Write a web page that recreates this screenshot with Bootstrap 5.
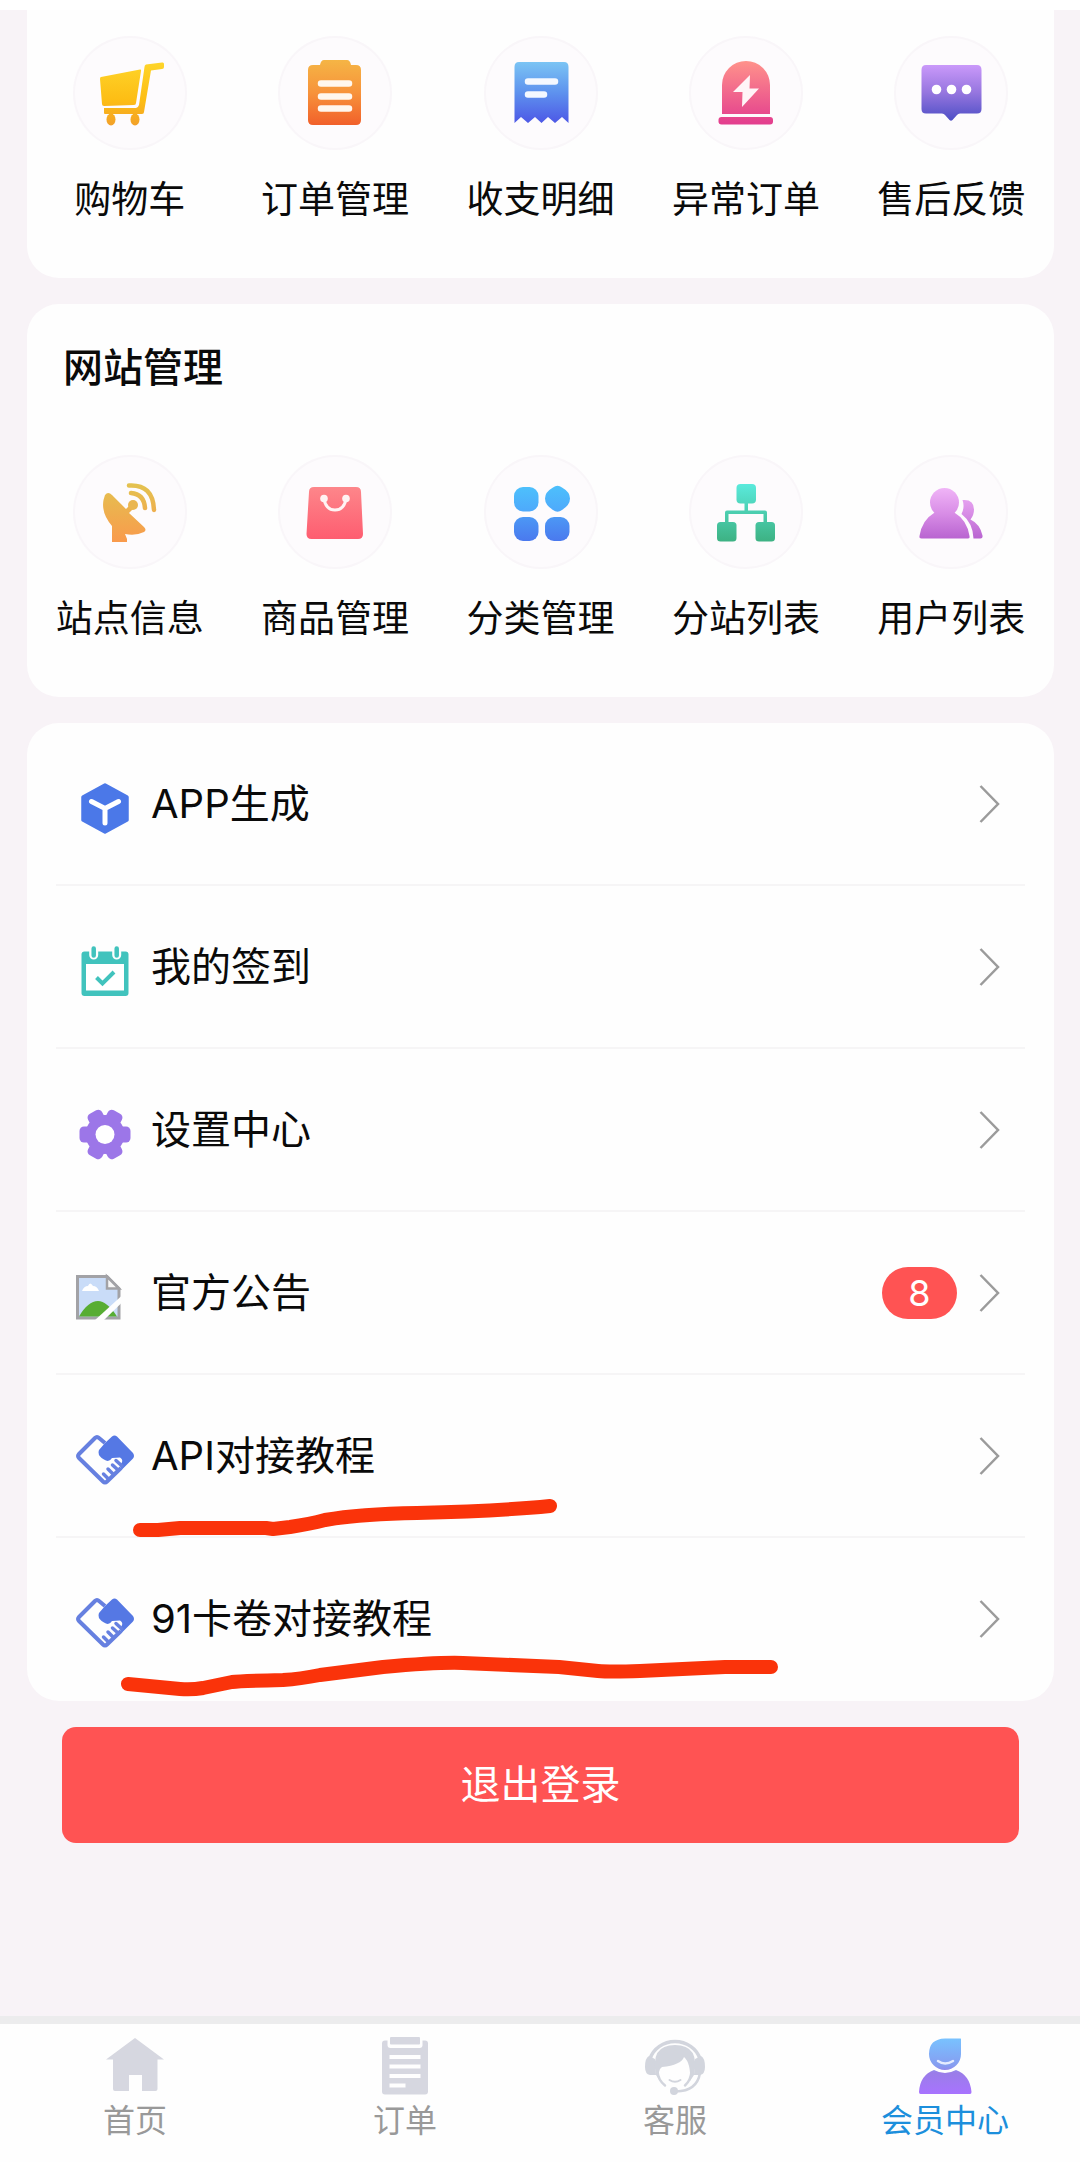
<!DOCTYPE html>
<html lang="zh-CN">
<head>
<meta charset="utf-8">
<meta name="viewport" content="width=device-width, initial-scale=1">
<title>会员中心</title>
<link href="https://cdn.jsdelivr.net/npm/bootstrap@5.3.0/dist/css/bootstrap.min.css" rel="stylesheet">
<style>
  body { background: #f8f3f7; color: #0a0a0a; font-family: Inter, "Noto Sans CJK SC", sans-serif; }
  a { color: inherit; text-decoration: none; }
  svg { display: block; flex: none; }
  .top-strip { height: 10px; }
  .page-main { padding: 0 26px 170px 27px; }
  .panel { background: #fefefe; border-radius: 32px; margin-bottom: 26px; }
  .panel-cut { border-radius: 0 0 32px 32px; padding: 26px 0 54px; }
  .panel-site { padding: 40px 0 54px; }
  .panel-title { font-size: 40px; line-height: 48px; font-weight: 500; margin: 0 0 63px 36px; }
  .shortcut-disc { width: 114px; height: 114px; background: #fdfbfd; border-radius: 50%; box-shadow: inset 0 0 0 2px #f9f6f9; margin-bottom: 26px; }
  .shortcut-label { font-size: 37px; line-height: 48px; white-space: nowrap; }
  .panel-menu { padding: 0 29px; }
  .menu-row { height: 163px; padding: 0 25px 0 20px; font-size: 40px; line-height: 48px; border-bottom: 2px solid #f6f5f6; }
  .menu-row:last-of-type { border-bottom-color: transparent; }
  .menu-icon { margin: 8px 17px 0 0; }
  .count-pill { width: 75px; height: 52px; border-radius: 26px; background: #ff5353; color: #fff; font-size: 36px; line-height: 52px; margin-right: 22px; }
  .pen-marks { left: 0; top: 0; pointer-events: none; }
  .btn-logout { --bs-btn-bg: #ff5353; --bs-btn-color: #fff; --bs-btn-hover-bg: #f04444; --bs-btn-hover-color: #fff; height: 116px; border-radius: 14px; font-size: 40px; line-height: 48px; border: 0; }
  .logout-wrap { padding: 0 35px; }
  .tabbar { background: #fefefe; border-top: 8px solid #ececed; }
  .tab-link { padding: 13px 0 21px; color: #999; font-size: 32px; line-height: 40px; }
  .tab-link svg { margin-bottom: 6px; }
  .tab-link.current { color: #1c8fdc; }
</style>
<script src="https://cdn.jsdelivr.net/npm/bootstrap@5.3.0/dist/js/bootstrap.bundle.min.js"></script>
</head>
<body>
<div class="top-strip bg-white"></div>
<main class="page-main">

  <section class="panel panel-cut">
    <div class="row g-0 text-center">
      <a href="#" class="col d-flex flex-column align-items-center">
        <span class="shortcut-disc"><svg width="114" height="114" viewBox="0 0 114 114"><defs><linearGradient id="gCart" gradientUnits="userSpaceOnUse" x1="0" y1="26" x2="0" y2="90"><stop stop-color="#fed52a"/><stop offset=".6" stop-color="#fdbd14"/><stop offset="1" stop-color="#f2a02a"/></linearGradient></defs><g fill="url(#gCart)"><path d="M28 41 67 33.500Q68.500 33 68 35L63 67Q63 69 61 69L31 70Q29 70 29 68L27 43Q27 41 28 41Z"/><path d="M73 28.500 89 26.500Q91 26 91 28V31Q91 33 89 33L78 34.500 71 76Q71 78 69 78H32Q31 78 31 77V72L63 72Q65 72 66 69L71.500 31Q71.500 29 73 28.500Z"/><ellipse cx="38" cy="83.500" rx="4.500" ry="6"/><ellipse cx="62" cy="83.500" rx="4.500" ry="6"/><path d="M36 77h4v4h-4zM60 77h4v4h-4z"/></g></svg></span>
        <span class="shortcut-label">购物车</span>
      </a>
      <a href="#" class="col d-flex flex-column align-items-center">
        <span class="shortcut-disc"><svg width="114" height="114" viewBox="0 0 114 114"><defs><linearGradient id="gClip" gradientUnits="userSpaceOnUse" x1="0" y1="24" x2="0" y2="89"><stop stop-color="#f5b545"/><stop offset=".5" stop-color="#f7933b"/><stop offset="1" stop-color="#f1602a"/></linearGradient></defs><path fill="url(#gClip)" d="M35 29H42Q43 24 46 24H69Q72 24 73 29H78Q83 29 83 34V84Q83 89 78 89H35Q30 89 30 84V34Q30 29 35 29Z"/><path d="M43 47.500H71M43 60.500H71M43 72.500H71" stroke="#fff7ee" stroke-width="6.500" stroke-linecap="round"/></svg></span>
        <span class="shortcut-label">订单管理</span>
      </a>
      <a href="#" class="col d-flex flex-column align-items-center">
        <span class="shortcut-disc"><svg width="114" height="114" viewBox="0 0 114 114"><defs><linearGradient id="gBill" gradientUnits="userSpaceOnUse" x1="0" y1="26" x2="0" y2="87"><stop stop-color="#7bc4f4"/><stop offset=".5" stop-color="#5e92ee"/><stop offset="1" stop-color="#4d58e6"/></linearGradient></defs><path fill="url(#gBill)" d="M35 26H80Q84.500 26 84.500 31V87L78 81 71 87 64 81 57.500 87 51 81 44 87 37 81 30.500 87V31Q30.500 26 35 26Z"/><path d="M44 45.500H71M44 58.500H60" stroke="#f4f8ff" stroke-width="6.500" stroke-linecap="round"/></svg></span>
        <span class="shortcut-label">收支明细</span>
      </a>
      <a href="#" class="col d-flex flex-column align-items-center">
        <span class="shortcut-disc"><svg width="114" height="114" viewBox="0 0 114 114"><defs><linearGradient id="gAlarm" gradientUnits="userSpaceOnUse" x1="0" y1="25" x2="0" y2="88"><stop stop-color="#ff928b"/><stop offset="1" stop-color="#e33d8e"/></linearGradient></defs><g fill="url(#gAlarm)"><path d="M33 78V49A24 24 0 0 1 81 49V78Z"/><rect x="29.500" y="81" width="54.500" height="7.500" rx="3"/></g><path fill="#fff5f7" d="M61 39 44 56H53.500L53 71 70 52.500H60.500Z"/></svg></span>
        <span class="shortcut-label">异常订单</span>
      </a>
      <a href="#" class="col d-flex flex-column align-items-center">
        <span class="shortcut-disc"><svg width="114" height="114" viewBox="0 0 114 114"><defs><linearGradient id="gChat" gradientUnits="userSpaceOnUse" x1="0" y1="29" x2="0" y2="84"><stop stop-color="#ca99fa"/><stop offset=".5" stop-color="#9676df"/><stop offset="1" stop-color="#4f4fc6"/></linearGradient></defs><path fill="url(#gChat)" d="M32 29H83Q87.500 29 87.500 34V73Q87.500 77.500 83 77.500H66Q64 77.500 63 79L58.500 84Q57 85.500 55.500 84L51 79Q50 77.500 48 77.500H32Q27.500 77.500 27.500 73V34Q27.500 29 32 29Z"/><g fill="#fff"><circle cx="42.500" cy="53.500" r="4.800"/><circle cx="57.500" cy="53.500" r="4.800"/><circle cx="72.500" cy="53.500" r="4.800"/></g></svg></span>
        <span class="shortcut-label">售后反馈</span>
      </a>
    </div>
  </section>

  <section class="panel panel-site">
    <h2 class="panel-title">网站管理</h2>
    <div class="row g-0 text-center">
      <a href="#" class="col d-flex flex-column align-items-center">
        <span class="shortcut-disc"><svg width="114" height="114" viewBox="0 0 114 114"><defs><linearGradient id="gDish" gradientUnits="userSpaceOnUse" x1="0" y1="28" x2="0" y2="87"><stop stop-color="#e3c350"/><stop offset="1" stop-color="#f99a4c"/></linearGradient></defs><path fill="url(#gDish)" d="M32 40Q35 36 39 40L53 54 57 50 60 54 56 58 71 72Q74 75 71 77Q63 81 52 79L54 84V87H39V71Q28 58 30.500 45Z"/><circle cx="60" cy="50" r="5" fill="#eab650"/><g fill="none" stroke="url(#gDish)" stroke-width="4.500" stroke-linecap="round"><path d="M58 38Q71 39 72 53"/><path d="M56 30.500Q80 29 81 55"/></g></svg></span>
        <span class="shortcut-label">站点信息</span>
      </a>
      <a href="#" class="col d-flex flex-column align-items-center">
        <span class="shortcut-disc"><svg width="114" height="114" viewBox="0 0 114 114"><defs><linearGradient id="gBag" gradientUnits="userSpaceOnUse" x1="0" y1="32" x2="0" y2="84"><stop stop-color="#fd868a"/><stop offset="1" stop-color="#fe5d70"/></linearGradient></defs><path fill="url(#gBag)" d="M36 32H78Q83 32 83 37L85 79Q85 84 80 84H33.500Q28.500 84 28.500 79L31 37Q31 32 36 32Z"/><g fill="#fff3f3"><circle cx="46" cy="43.500" r="3.800"/><circle cx="68" cy="43.500" r="3.800"/></g><path d="M46 44Q48 55 57 55Q66 55 68 44" fill="none" stroke="#fff3f3" stroke-width="3"/></svg></span>
        <span class="shortcut-label">商品管理</span>
      </a>
      <a href="#" class="col d-flex flex-column align-items-center">
        <span class="shortcut-disc"><svg width="114" height="114" viewBox="0 0 114 114"><defs><linearGradient id="gTop" x1="0" y1="0" x2="0" y2="1"><stop stop-color="#4dc0fc"/><stop offset="1" stop-color="#4ea9fb"/></linearGradient><linearGradient id="gLow" x1="0" y1="0" x2="0" y2="1"><stop stop-color="#4c98f5"/><stop offset="1" stop-color="#4a79ee"/></linearGradient></defs><rect x="30" y="32" width="24.500" height="24.500" rx="9" fill="url(#gTop)"/><path fill="url(#gTop)" d="M69 32.500Q73.500 29 78 32.500Q86 37 86 43.500Q86 50 78 55Q73.500 58.500 69 55Q61 50 61 43.500Q61 37 69 32.500Z"/><rect x="30" y="62" width="24.500" height="24" rx="9" fill="url(#gLow)"/><rect x="61" y="62" width="24.500" height="24" rx="9" fill="url(#gLow)"/></svg></span>
        <span class="shortcut-label">分类管理</span>
      </a>
      <a href="#" class="col d-flex flex-column align-items-center">
        <span class="shortcut-disc"><svg width="114" height="114" viewBox="0 0 114 114"><defs><linearGradient id="gTree" gradientUnits="userSpaceOnUse" x1="0" y1="29" x2="0" y2="87"><stop stop-color="#5aeadc"/><stop offset="1" stop-color="#3db182"/></linearGradient></defs><g fill="url(#gTree)"><rect x="47.500" y="29" width="19.500" height="19.500" rx="4"/><rect x="28" y="67" width="19.500" height="19.500" rx="3.500"/><rect x="66.500" y="67" width="19.500" height="19.500" rx="3.500"/><path d="M55.500 48h3.500v7.500h17q2 0 2 2V68h-3.500v-9H39.500v9H36V57.500q0-2 2-2h17.500z"/></g></svg></span>
        <span class="shortcut-label">分站列表</span>
      </a>
      <a href="#" class="col d-flex flex-column align-items-center">
        <span class="shortcut-disc"><svg width="114" height="114" viewBox="0 0 114 114"><defs><linearGradient id="gUsers" gradientUnits="userSpaceOnUse" x1="0" y1="33" x2="0" y2="84"><stop stop-color="#f0b4f7"/><stop offset=".5" stop-color="#d88de6"/><stop offset="1" stop-color="#b863d0"/></linearGradient></defs><g fill="url(#gUsers)"><circle cx="50.500" cy="47.500" r="14.500"/><path d="M40 58H61Q73 65 75.500 81Q76 83.500 74 83.500H27.500Q25 83.500 25.500 81Q28 65 40 58Z"/><path d="M68.500 45Q80 44 80 54.500Q80 60 76.500 64.500Q86 69 88.500 80.500Q89 83.500 86.500 83.500H79.500Q79 68 67.500 59Q71 52 68.500 45Z"/></g></svg></span>
        <span class="shortcut-label">用户列表</span>
      </a>
    </div>
  </section>

  <section class="panel panel-menu position-relative">
    <a href="#" class="menu-row d-flex align-items-center">
      <svg class="menu-icon" width="58" height="58" viewBox="0 0 58 58"><path d="M29 6 51 18V41L29 53 7 41V18Z" fill="#4b78e8" stroke="#4b78e8" stroke-width="3.500" stroke-linejoin="round"/><path d="M15.500 22.500 29 29.500 42.500 22.500M29 29.500V44" fill="none" stroke="#fff" stroke-width="5" stroke-linecap="round"/></svg>
      <span class="flex-grow-1">APP生成</span>
      <svg width="21" height="38" viewBox="0 0 21 38"><path d="M1.500 1 19 19 1.500 37" fill="none" stroke="#9b9b9b" stroke-width="2.500"/></svg>
    </a>
    <a href="#" class="menu-row d-flex align-items-center">
      <svg class="menu-icon" width="58" height="58" viewBox="0 0 58 58"><rect x="5.500" y="9.500" width="47" height="44.500" rx="3" fill="#41c3bd"/><path d="M10 22H48V48.500H10Z" fill="#fff"/><path d="M17.700 5V13M40.700 5V13" stroke="#fefefe" stroke-width="9" stroke-linecap="round"/><path d="M17.700 6.500V13.500M40.700 6.500V13.500" stroke="#41c3bd" stroke-width="4.500" stroke-linecap="round"/><path d="M20.500 35.500 26.500 41.500 38 30" fill="none" stroke="#41c3bd" stroke-width="4"/></svg>
      <span class="flex-grow-1">我的签到</span>
      <svg width="21" height="38" viewBox="0 0 21 38"><path d="M1.500 1 19 19 1.500 37" fill="none" stroke="#9b9b9b" stroke-width="2.500"/></svg>
    </a>
    <a href="#" class="menu-row d-flex align-items-center">
      <svg class="menu-icon" width="58" height="58" viewBox="0 0 58 58"><g fill="#9c76e8"><circle cx="29" cy="29.500" r="19.500"/><rect x="3.500" y="21.500" width="51" height="16" rx="4.500"/><rect x="3.500" y="21.500" width="51" height="16" rx="4.500" transform="rotate(62 29 29.500)"/><rect x="3.500" y="21.500" width="51" height="16" rx="4.500" transform="rotate(-62 29 29.500)"/></g><circle cx="29" cy="29.500" r="9.500" fill="#fff"/></svg>
      <span class="flex-grow-1">设置中心</span>
      <svg width="21" height="38" viewBox="0 0 21 38"><path d="M1.500 1 19 19 1.500 37" fill="none" stroke="#9b9b9b" stroke-width="2.500"/></svg>
    </a>
    <a href="#" class="menu-row d-flex align-items-center">
      <svg class="menu-icon" width="58" height="58" viewBox="0 0 58 58"><path d="M1.500 8.500H31L43 20.500V50H1.500Z" fill="#c9dcf8" stroke="#a2a2a6" stroke-width="3"/><path d="M31 8.500V20.500H43Z" fill="#f7f7f7" stroke="#a2a2a6" stroke-width="2.500"/><path d="M6 23Q8 18 12 18Q14 13 17 18Q21 18 23 23Z" fill="#fff"/><path d="M3 48.500Q12 33 22 33Q31 33 41 48.500Z" fill="#57ad33"/><path d="M18 53 46 27.500V34.500L27 53Z" fill="#fefefe"/></svg>
      <span class="flex-grow-1">官方公告</span>
      <span class="count-pill text-center">8</span>
      <svg width="21" height="38" viewBox="0 0 21 38"><path d="M1.500 1 19 19 1.500 37" fill="none" stroke="#9b9b9b" stroke-width="2.500"/></svg>
    </a>
    <a href="#" class="menu-row d-flex align-items-center">
      <svg class="menu-icon" width="58" height="58" viewBox="0 0 58 58"><path d="M29 12 23 7Q21 5 19 7L3 23Q1 25 3 27L27 50.500Q29 52.500 31 50.500L45 37" fill="none" stroke="#6680e0" stroke-width="4" stroke-linejoin="round"/><path d="M29 12 36 5.500Q38.500 3.500 41 5.500L57 22Q59 25 57 27.500L46 38.500Q43 36 45 33Q48 29 44 26.500L36 27Q33 32 28 28.500Q21 25 23 19Z" fill="#5578e4"/><path d="M27.500 43 32 47.500M32 38 37 43M36.500 34 42 39M40 29.500 46 35" stroke="#6680e0" stroke-width="3.500" stroke-linecap="round"/></svg>
      <span class="flex-grow-1">API对接教程</span>
      <svg width="21" height="38" viewBox="0 0 21 38"><path d="M1.500 1 19 19 1.500 37" fill="none" stroke="#9b9b9b" stroke-width="2.500"/></svg>
    </a>
    <a href="#" class="menu-row d-flex align-items-center">
      <svg class="menu-icon" width="58" height="58" viewBox="0 0 58 58"><path d="M29 12 23 7Q21 5 19 7L3 23Q1 25 3 27L27 50.500Q29 52.500 31 50.500L45 37" fill="none" stroke="#6680e0" stroke-width="4" stroke-linejoin="round"/><path d="M29 12 36 5.500Q38.500 3.500 41 5.500L57 22Q59 25 57 27.500L46 38.500Q43 36 45 33Q48 29 44 26.500L36 27Q33 32 28 28.500Q21 25 23 19Z" fill="#5578e4"/><path d="M27.500 43 32 47.500M32 38 37 43M36.500 34 42 39M40 29.500 46 35" stroke="#6680e0" stroke-width="3.500" stroke-linecap="round"/></svg>
      <span class="flex-grow-1">91卡卷对接教程</span>
      <svg width="21" height="38" viewBox="0 0 21 38"><path d="M1.500 1 19 19 1.500 37" fill="none" stroke="#9b9b9b" stroke-width="2.500"/></svg>
    </a>
    <!-- hand-drawn red underlines -->
    <svg class="pen-marks position-absolute" width="1026" height="978" viewBox="27 723 1026 978" fill="none" stroke="#fa330a" stroke-width="14" stroke-linecap="round" stroke-linejoin="round"><path d="M140 1530H158L180 1528H266L273 1529 290 1527Q310 1524 325 1520Q360 1514 417 1513Q500 1511 550 1506"/><path d="M128 1684 180 1689Q192 1690 203 1688L232 1682Q240 1681 283 1680Q300 1679 320 1675L383 1667Q440 1662 463 1663L559 1667 598 1671Q610 1672 640 1671L725 1667H771"/></svg>
  </section>

  <div class="logout-wrap d-grid">
    <button type="button" class="btn btn-logout">退出登录</button>
  </div>
</main>

<nav class="tabbar fixed-bottom">
  <div class="row g-0 text-center">
    <a href="#" class="col tab-link d-flex flex-column align-items-center">
      <svg width="58" height="58" viewBox="0 0 58 58"><path fill="#d6d7e0" d="M29 1 58 22.500H51.500V52Q51.500 54 49.500 54H36V38H23V54H9Q7 54 7 52V22.500H0Z"/></svg>
      首页
    </a>
    <a href="#" class="col tab-link d-flex flex-column align-items-center">
      <svg width="58" height="58" viewBox="0 0 58 58"><rect x="6" y="3.500" width="46" height="54" rx="3" fill="#d6d7e0"/><path d="M11.500 0H46.500V8Q46.500 11 43.500 11H14.500Q11.500 11 11.500 8Z" fill="#fefefe"/><rect x="14" y="0" width="30" height="7.500" rx="1" fill="#d6d7e0"/><path d="M13.500 20H44.500M13.500 29.500H44.500M13.500 39H44.500M13.500 48.500H29.500" stroke="#fefefe" stroke-width="4"/></svg>
      订单
    </a>
    <a href="#" class="col tab-link d-flex flex-column align-items-center">
      <svg width="60" height="58" viewBox="0 0 60 58"><g fill="none" stroke="#d2d5dd" stroke-linecap="round"><path d="M5 22A26 24 0 0 1 55 22" stroke-width="3.500"/><path d="M55 36Q52 54 31 54.500" stroke-width="2.500"/><path d="M12.500 34Q13 43 20 48.500M46.500 34Q46 43 40 48.500" stroke-width="2.500"/><path d="M24.500 43Q30 46.500 35.500 43" stroke-width="2"/></g><g fill="#d2d5dd"><path d="M4 19 10 22 11 38H5Q0 37 0 30Q0 21 4 19ZM56 19 50 22 49 38H55Q60 37 60 30Q60 21 56 19Z"/><path d="M11 38Q5 8 30 8Q55 8 49 38L45 44Q46 26 39 20Q36 28 17 30Q12 33 15 44Z"/><circle cx="29" cy="54" r="4"/></g></svg>
      客服
    </a>
    <a href="#" class="col tab-link current d-flex flex-column align-items-center" aria-current="page">
      <svg width="58" height="58" viewBox="0 0 58 58"><defs><linearGradient id="gMe" gradientUnits="userSpaceOnUse" x1="0" y1="1" x2="0" y2="57"><stop stop-color="#78c3ff"/><stop offset=".5" stop-color="#869cf0"/><stop offset=".62" stop-color="#9a7de8"/><stop offset="1" stop-color="#a873ff"/></linearGradient></defs><path fill="url(#gMe)" d="M18 33Q29 39 40 33Q54 38 55.500 55Q55.500 57 54 57H4.500Q3 57 3 55Q4 38 18 33Z"/><path fill="url(#gMe)" stroke="#fefefe" stroke-width="2" d="M29 .500H44.500Q46 .500 46 2V17A17 17 0 0 1 12 17Q12 1 29 .500Z"/><path d="M22 24Q29 29 37 24" fill="none" stroke="#e4ecff" stroke-width="2.500" stroke-linecap="round"/></svg>
      会员中心
    </a>
  </div>
</nav>
</body>
</html>
